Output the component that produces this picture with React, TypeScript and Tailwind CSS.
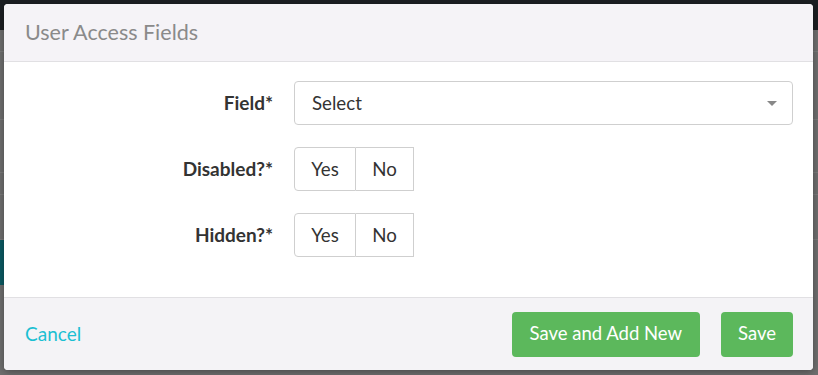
import React from 'react';

function ToggleGroup() {
  return (
    <div className="flex h-[44px] text-[18.7px] text-[#333]">
      <button className="w-[62px] rounded-l-[4px] border border-[#cfcfcf] bg-white">Yes</button>
      <button className="w-[58px] border border-l-0 border-[#cfcfcf] bg-white">No</button>
    </div>
  );
}

export default function App() {
  return (
    <div
      className="relative h-[375px] w-[818px] overflow-hidden bg-[#6f6f6f]"
      style={{ fontFamily: 'Lato, "Open Sans", sans-serif' }}
    >
      {/* dimmed page behind the modal */}
      <div className="h-[30px] bg-[#1c1f23]" />
      <div className="h-[22px] border-b border-[#7c7c7c]" />
      <div className="h-[68px] border-b border-[#7c7c7c]" />
      <div className="h-[53px] border-b border-[#7c7c7c]" />
      <div className="h-[22px] border-b border-[#7c7c7c]" />
      <div className="h-[45px] border-b border-[#7c7c7c]" />
      <div className="h-[45px] w-[4px] bg-[#0c5b63]" />

      {/* modal */}
      <div className="absolute left-[4px] top-[4px] flex h-[366px] w-[809px] flex-col overflow-hidden rounded-[4px] bg-white shadow-[0_2px_8px_rgba(0,0,0,0.35)]">
        <div className="flex h-[58px] items-center border-b border-[#e1e0e3] bg-[#f5f3f7] px-[21px]">
          <h2 className="text-[21.5px] text-[#8a8a8a]">User Access Fields</h2>
        </div>

        <div className="grid grid-cols-[269px_1fr] items-center gap-x-[21px] gap-y-[22px] pb-[40px] pl-0 pr-[20px] pt-[19px]">
          <label className="text-right text-[19px] font-bold text-[#333]">Field*</label>
          <div className="flex h-[44px] items-center justify-between rounded-[4px] border border-[#cfcfcf] bg-white pl-[17px] pr-[15px] text-[18.7px] text-[#333]">
            <span>Select</span>
            <svg width="10" height="5" viewBox="0 0 10 5">
              <path d="M0 0h10L5 5z" fill="#888" />
            </svg>
          </div>

          <label className="text-right text-[19px] font-bold text-[#333]">Disabled?*</label>
          <ToggleGroup />

          <label className="text-right text-[19px] font-bold text-[#333]">Hidden?*</label>
          <ToggleGroup />
        </div>

        <div className="flex flex-1 items-center justify-between border-t border-[#e1e0e3] bg-[#f4f3f6] pl-[21px] pr-[20px]">
          <button className="text-[19px] text-[#1bbfd2]">Cancel</button>
          <div className="flex gap-[21px]">
            <button className="h-[45px] rounded-[4px] bg-[#5cb85c] px-[18px] text-[18.5px] text-white">
              Save and Add New
            </button>
            <button className="h-[45px] rounded-[4px] bg-[#5cb85c] px-[17px] text-[18.5px] text-white">
              Save
            </button>
          </div>
        </div>
      </div>
    </div>
  );
}
